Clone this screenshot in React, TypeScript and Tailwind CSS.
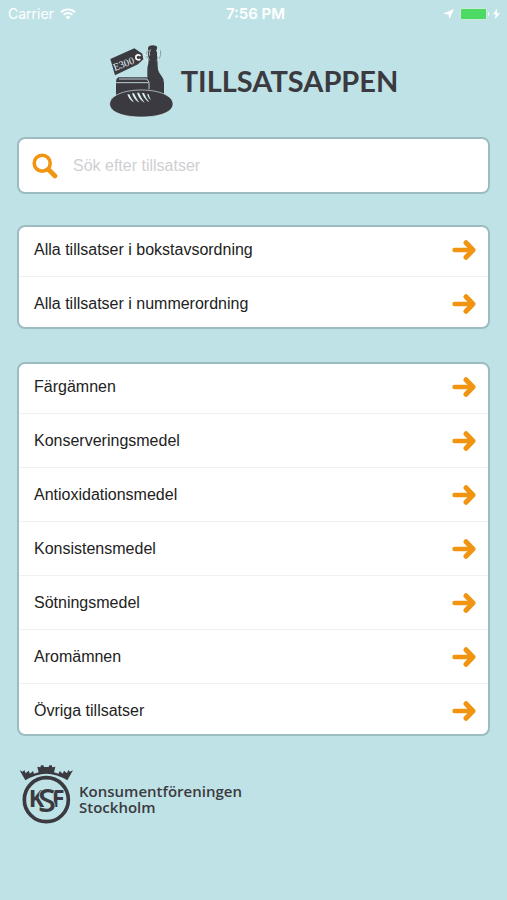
import { useId } from 'react';

interface LinkListProps {
  label: string;
  items: string[];
}

const orderings = ['Alla tillsatser i bokstavsordning', 'Alla tillsatser i nummerordning'];

const categories = [
  'Färgämnen',
  'Konserveringsmedel',
  'Antioxidationsmedel',
  'Konsistensmedel',
  'Sötningsmedel',
  'Aromämnen',
  'Övriga tillsatser',
];

function StatusBar() {
  return (
    <div className="flex h-7 items-center justify-between px-2 font-['Inter',sans-serif] text-sm text-white">
      <div className="flex flex-1 items-center gap-1.5">
        <span>Carrier</span>
        <svg width="16" height="12" viewBox="0 0 16 12" fill="none" stroke="currentColor" strokeWidth="1.9" aria-hidden="true">
          <path d="M1 4.2a10 10 0 0 1 14 0M3.5 6.9a6.4 6.4 0 0 1 9 0" />
          <path d="M8 11.5L5.6 9a3.4 3.4 0 0 1 4.8 0z" fill="currentColor" stroke="none" />
        </svg>
      </div>
      <span className="text-[15px] font-semibold">7:56 PM</span>
      <div className="-mr-1 flex flex-1 items-center justify-end gap-1.5">
        <svg width="11" height="10" viewBox="0 0 11 10" fill="currentColor" aria-hidden="true">
          <path d="M11 0L6.4 10 5.6 5.4 0 4.8z" />
        </svg>
        <svg width="43" height="12" viewBox="0 0 43 12" aria-hidden="true">
          <rect x="0.5" y="0.5" width="26" height="11" rx="1.5" fill="#4cd964" stroke="#c9ecd9" />
          <path d="M28 4q2.500 2 0 4z" fill="#fff" />
          <path d="M37 0.500L33 6.600h3L34.500 11.500 40 5.200h-3.200z" fill="#fff" />
        </svg>
      </div>
    </div>
  );
}

/* Bread, jar and bottle with the E-number tag */
function AppLogo() {
  return (
    <svg className="h-[74px] w-16 shrink-0" viewBox="30 24 192 222" fill="#3a3a40" aria-hidden="true">
      <path d="M151 30q10-4 21 0 4 3 2 10l2 50q0 16 10 28 9 10 9 24v55h-50V100q0-10 3-17l-1-43q-1-7 4-10z" />
      <path d="M151 42q-9 5-6 15 2 10 7 16M155 40q-6 8-3 19" fill="none" stroke="#e3f1f2" strokeWidth="2" />
      <path d="M173 39q12 5 10 19-2 11-10 16M172 42q7 8 4 19" fill="none" stroke="#e3f1f2" strokeWidth="2.500" />
      <path d="M184 43q4 12-3 25M145 44q-4 10 0 22" fill="none" stroke="#6b767b" strokeWidth="2" />
      <path d="M121 62q13-11 25-3M124 63q10-3 13 6t12 6" fill="none" stroke="#e3f1f2" strokeWidth="3" />
      <path d="M58 124h86q6 5 6 13v55H51v-55q0-9 7-13z" />
      <path d="M60 129h84l6 10v21M51 140h98" fill="none" stroke="#d9edef" strokeWidth="2.500" />
      <path d="M34 69l72-32 24 16 3 17-16 15-69 33z" />
      <circle cx="118" cy="64" r="7.500" fill="none" stroke="#fff" strokeWidth="5" strokeDasharray="37 11" strokeDashoffset="-5" />
      <text x="47" y="105" transform="rotate(-21 47 105)" fill="#e3f1f2" fontFamily="Liberation Serif, serif" fontSize="31">E300</text>
      <path d="M32 204c0-25 42-42 95-42s95 17 95 42-42 39-95 39-95-14-95-39z" stroke="#d9edef" strokeWidth="2" />
      <path d="M85 175q5 17 20 24-9-11-14-24zM99 172q5 19 22 28-10-14-16-28zM114 170q6 21 23 30-11-15-17-30zM129 171q6 19 22 28-11-14-16-28zM144 175q4 12 12 18-5-9-7-18z" fill="#d9edef" />
    </svg>
  );
}

function SearchIcon() {
  return (
    <svg width="26" height="26" viewBox="0 0 26 26" fill="none" stroke="#f09412" aria-hidden="true">
      <circle cx="10.200" cy="10.200" r="8" strokeWidth="3.600" />
      <path d="M17 17l6 6" strokeWidth="4.600" strokeLinecap="round" />
    </svg>
  );
}

function ArrowIcon() {
  return (
    <svg className="shrink-0" width="24" height="20" viewBox="0 0 24 20" fill="none" stroke="#f09412" strokeLinecap="round" strokeLinejoin="round" aria-hidden="true">
      <path d="M2.500 10H20" strokeWidth="4.400" />
      <path d="M14 2.700L21 10l-7 7.300" strokeWidth="5" />
    </svg>
  );
}

function LinkList({ label, items }: LinkListProps) {
  return (
    <nav aria-label={label} className="overflow-hidden rounded-lg border-2 border-[#9dbcc2] bg-white">
      <ul className="-mt-1 -mb-[3px] divide-y divide-[#f1f1f1]">
        {items.map((item) => (
          <li key={item}>
            <a href="#" className="flex h-[53px] items-center justify-between pr-3 pl-[15px] text-base text-[#222]">
              {item}
              <ArrowIcon />
            </a>
          </li>
        ))}
      </ul>
    </nav>
  );
}

/* Crowned KSF monogram */
function KsfLogo() {
  return (
    <svg className="h-15 w-[54px] shrink-0" viewBox="27 30 162 180" fill="#3a3a40" aria-hidden="true">
      <path d="M46 76L29 46l9 4 5-5 4 10 9-8 4 9 9-8 3 8 14-4-2-8-2-9 9 2 2-6h7l2 5h14l2-5h7l2 6 9-2-2 9-2 8 14 4 3-8 9 8 4-9 9 8 4-10 5 5 9-4-17 30Q109 36 46 76z" />
      <circle cx="109" cy="134" r="66" fill="none" stroke="#3a3a40" strokeWidth="11" />
      <text y="157" fontFamily="Open Sans, sans-serif" fontSize="70" fontWeight="700">
        <tspan x="56">K</tspan>
        <tspan x="125">F</tspan>
        <tspan x="84" y="170" fontSize="98" fontWeight="600" stroke="#bfe2e6" strokeWidth="4" paintOrder="stroke">S</tspan>
      </text>
    </svg>
  );
}

export default function App() {
  const searchId = useId();

  return (
    <div className="min-h-screen bg-[#bfe2e6] font-['Liberation_Sans',sans-serif]">
      <StatusBar />

      <header className="flex items-center justify-center gap-2 pt-4 text-[#3a3a40]">
        <AppLogo />
        <h1 className="font-['Lato',sans-serif] text-[29px] font-bold">TILLSATSAPPEN</h1>
      </header>

      <main className="flex flex-col px-[17px] pt-[19px]">
        <form role="search" className="mb-[31px] flex h-[57px] items-center gap-[15px] rounded-lg border-2 border-[#9dbcc2] bg-white px-[13px]">
          <label htmlFor={searchId} aria-label="Sök efter tillsatser">
            <SearchIcon />
          </label>
          <input
            id={searchId}
            type="search"
            placeholder="Sök efter tillsatser"
            className="min-w-0 flex-1 text-base text-[#222] outline-none placeholder:text-[#cfcfd3]"
          />
        </form>

        <div className="flex flex-col gap-[33px]">
          <LinkList label="Ordning" items={orderings} />
          <LinkList label="Kategorier" items={categories} />
        </div>
      </main>

      <footer className="flex items-center gap-1.5 px-[19px] pt-[29px] pb-8 text-[#3a3a40]">
        <KsfLogo />
        <p className="pt-2 font-['Open_Sans',sans-serif] text-[15px] leading-4 font-semibold">
          Konsumentföreningen
          <br />
          Stockholm
        </p>
      </footer>
    </div>
  );
}
